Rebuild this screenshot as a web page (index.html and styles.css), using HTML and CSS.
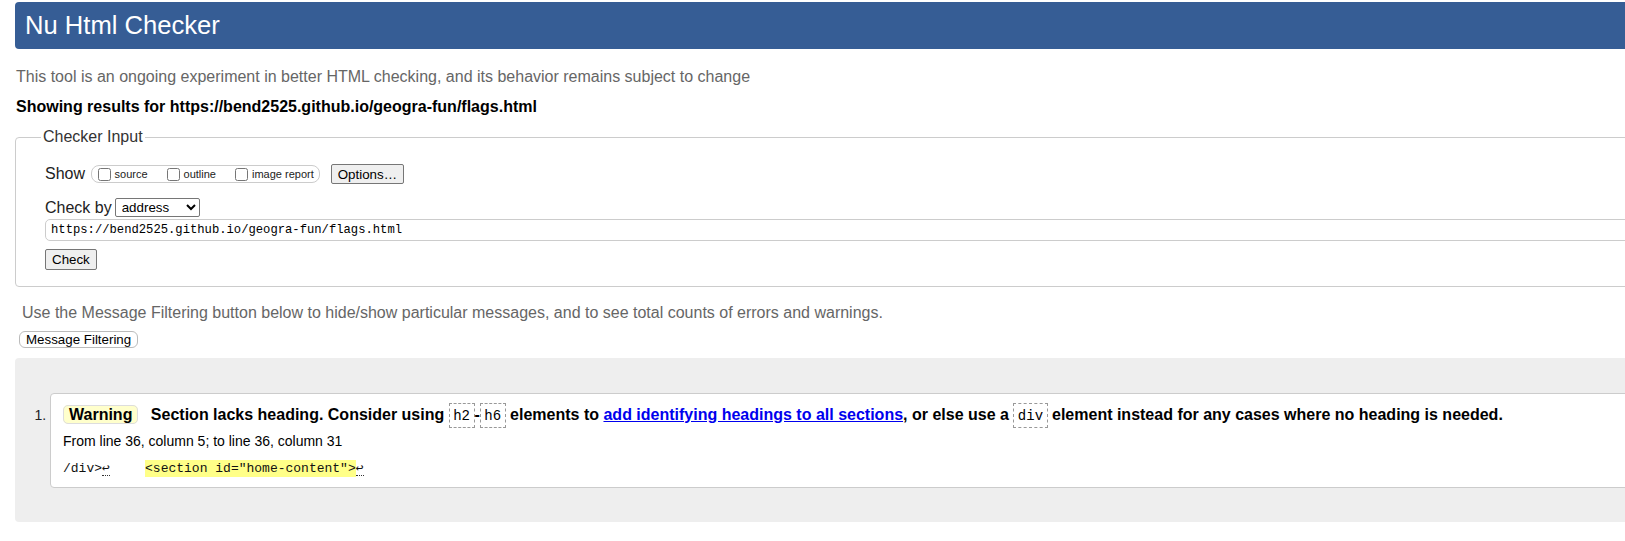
FILE: index.html
```html
<!DOCTYPE html>
<html lang="en">
<head>
<meta charset="utf-8">
<title>Nu Html Checker</title>
<link rel="stylesheet" href="styles.css">
</head>
<body>
<div class="page">
  <h1 class="brand">Nu Html Checker</h1>
  <p class="intro">This tool is an ongoing experiment in better HTML checking, and its behavior remains subject to change</p>
  <p class="showing">Showing results for https://bend2525.github.io/geogra-fun/flags.html</p>
  <form class="checker-form">
    <fieldset class="input-fs">
      <legend>Checker Input</legend>
      <div class="row show-row">
        <span class="row-label">Show</span>
        <span class="checkgroup">
          <label class="opt"><input type="checkbox">source</label>
          <label class="opt"><input type="checkbox">outline</label>
          <label class="opt last"><input type="checkbox">image report</label>
        </span>
        <button type="button" class="btn btn-options">Options…</button>
      </div>
      <div class="row by-row">
        <span class="row-label">Check by</span>
        <select class="by-select"><option>address</option></select>
      </div>
      <div class="row url-row">
        <input class="url" type="text" value="https://bend2525.github.io/geogra-fun/flags.html">
      </div>
      <div class="row submit-row">
        <button type="button" class="btn">Check</button>
      </div>
    </fieldset>
  </form>
  <p class="filter-note">Use the Message Filtering button below to hide/show particular messages, and to see total counts of errors and warnings.</p>
  <button type="button" class="filter-btn">Message Filtering</button>
  <div class="results">
    <ol class="messages">
      <li class="msg-item">
        <p class="msg"><strong class="badge">Warning</strong> <span>Section lacks heading. Consider using <code>h2</code>-<code>h6</code> elements to <a href="#">add identifying headings to all sections</a>, or else use a <code>div</code> element instead for any cases where no heading is needed.</span></p>
        <p class="location">From line 36, column 5; to line 36, column 31</p>
        <p class="extract">/div&gt;<span class="lf">↩</span>    <mark class="hl">&lt;section id="home-content"&gt;</mark><span class="lf">↩</span></p>
      </li>
    </ol>
  </div>
</div>
</body>
</html>
```
FILE: styles.css
```css
html, body {
  overflow: hidden;
}
body {
  margin: 0;
  background: #fff;
  color: #000;
  font-family: "Liberation Sans", Arial, sans-serif;
  font-size: 16px;
}
.page {
  width: 1700px;
  padding: 2px 0 0 15px;
}
.brand {
  margin: 0;
  height: 47px;
  line-height: 47px;
  padding-left: 10px;
  background: #365d95;
  color: #fff;
  font-size: 25.6px;
  font-weight: normal;
  border-radius: 4px;
}
.intro {
  margin: 17.5px 0 0 1px;
  line-height: 20px;
  color: #666;
}
.showing {
  margin: 10px 0 0 1px;
  line-height: 20px;
  font-weight: bold;
}
.checker-form {
  margin: 0;
}
.input-fs {
  margin: 10.5px 0 0 0;
  padding: 17px 0 16px 29px;
  border: 1px solid #ccc;
  border-radius: 4px;
  min-width: 0;
}
.input-fs legend {
  padding: 0 2px;
  margin-left: -4px;
  line-height: 20px;
  color: #333;
}
.row {
  display: flex;
  align-items: center;
}
.row-label {
  color: #222;
}
.show-row {
  height: 20px;
}
.checkgroup {
  display: inline-flex;
  align-items: center;
  box-sizing: border-box;
  height: 18px;
  margin-left: 6px;
  padding: 0 5px 0 6px;
  border: 1px solid #ccc;
  border-radius: 8px;
  font-size: 11px;
  color: #222;
}
.opt {
  display: inline-flex;
  align-items: center;
  margin-right: 19.5px;
}
.opt.last {
  margin-right: 0;
}
.opt input {
  width: 13px;
  height: 13px;
  margin: 0 3.5px 0 0;
}
.btn {
  box-sizing: border-box;
  padding: 0 6px;
  background: #efefef;
  border: 1px solid #767676;
  border-radius: 2px;
  font-family: "Liberation Sans", Arial, sans-serif;
  font-size: 13.33px;
  color: #000;
}
.btn-options {
  height: 20px;
  margin-left: 11px;
}
.by-row {
  height: 21px;
  margin-top: 13px;
}
.by-select {
  box-sizing: border-box;
  width: 85px;
  height: 19px;
  margin-left: 3px;
  padding: 0 0 0 2px;
  font-family: "Liberation Sans", Arial, sans-serif;
  font-size: 13.33px;
  border: 1px solid #767676;
  border-radius: 2px;
  background: #fff;
  color: #000;
}
.url-row {
  margin-top: 1px;
}
.url {
  display: block;
  box-sizing: border-box;
  width: 100%;
  height: 22px;
  margin: 0;
  padding: 0 5px;
  border: 1px solid #ccc;
  border-radius: 5px;
  font-family: "Liberation Mono", "DejaVu Sans Mono", monospace;
  font-size: 12.2px;
  color: #000;
}
.submit-row {
  margin-top: 8px;
}
.submit-row .btn {
  height: 21px;
}
.filter-note {
  margin: 15.5px 0 0 0;
  padding-left: 7px;
  line-height: 20px;
  color: #666;
}
.filter-btn {
  display: block;
  box-sizing: border-box;
  height: 17px;
  margin: 8.5px 0 0 4px;
  padding: 0 6px;
  background: #fff;
  border: 1px solid #bbb;
  border-radius: 6px;
  font-family: "Liberation Sans", Arial, sans-serif;
  font-size: 13.33px;
  line-height: 15px;
  color: #000;
}
.results {
  margin-top: 10px;
  padding: 35px 0 34px;
  background: #eee;
  border-radius: 4px;
}
.messages {
  margin: 0;
  padding-left: 35px;
  font-size: 14px;
  color: #222;
}
.msg-item {
  padding: 8px 12px 10px;
  background: #fff;
  border: 1px solid #ccc;
  border-radius: 4px;
}
.msg {
  margin: 0;
  line-height: 26px;
  font-size: 16px;
  font-weight: bold;
  color: #000;
}
.badge {
  padding: 0 5px;
  margin-right: 8px;
  background: #ffc;
  border: 1px solid #ddd;
  border-radius: 5px;
}
.msg code {
  padding: 3.5px 3.5px;
  border: 1px dashed #999;
  font-family: "Liberation Mono", "DejaVu Sans Mono", monospace;
  font-size: 14px;
  font-weight: normal;
  vertical-align: 1px;
}
.msg a {
  color: #00e;
  text-decoration: underline;
}
.location {
  margin: 4px 0 0;
  line-height: 18px;
  font-size: 14px;
  color: #000;
}
.extract {
  margin: 9px 0 0;
  line-height: 17px;
  font-family: "Liberation Mono", "DejaVu Sans Mono", monospace;
  font-size: 13px;
  white-space: pre;
  color: #111;
}
.hl {
  margin-left: 4px;
  padding: 1px 0;
  background: #ff8;
  color: #111;
}
.lf {
  border-bottom: 1px dotted #333;
  font-family: "DejaVu Sans Mono", monospace;
  font-size: 13px;
}
```
